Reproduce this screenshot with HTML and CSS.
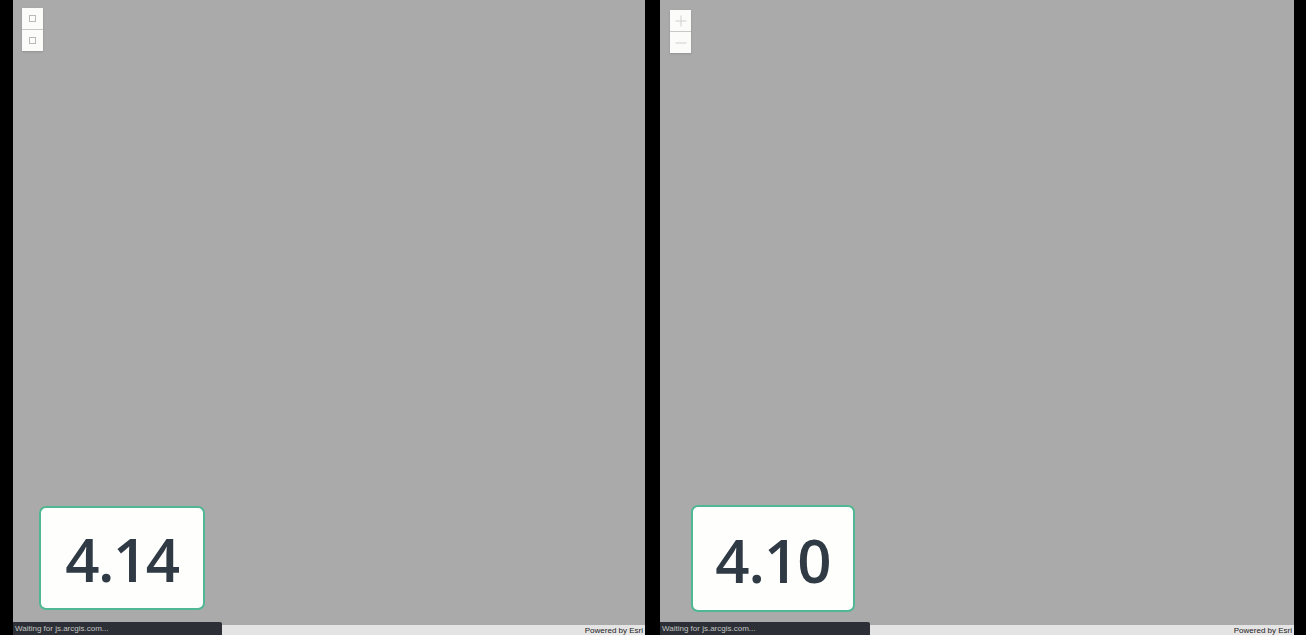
FILE: index.html
```html
<!DOCTYPE html>
<html>
<head>
<meta charset="utf-8">
<link rel="stylesheet" href="styles.css">
</head>
<body>
<div class="screen">
  <div class="panel panel-a">
    <div class="map"></div>
    <div class="attribution">Powered by Esri</div>
    <div class="zoom zoom-a">
      <div class="zbtn"><span class="tofu"></span></div>
      <div class="zbtn"><span class="tofu"></span></div>
    </div>
    <div class="badge badge-a">4.14</div>
    <div class="status">Waiting for js.arcgis.com...</div>
  </div>
  <div class="panel panel-b">
    <div class="map"></div>
    <div class="attribution">Powered by Esri</div>
    <div class="zoom zoom-b">
      <div class="zbtn">
        <svg width="12" height="12" viewBox="0 0 12 12"><path d="M6 0.5V11.5M0.5 6H11.5" stroke="#cfcfcc" stroke-width="1" fill="none"/></svg>
      </div>
      <div class="zbtn">
        <svg width="12" height="12" viewBox="0 0 12 12"><path d="M0.5 6H11.5" stroke="#cfcfcc" stroke-width="1" fill="none"/></svg>
      </div>
    </div>
    <div class="badge badge-b">4.10</div>
    <div class="status">Waiting for js.arcgis.com...</div>
  </div>
</div>
</body>
</html>
```
FILE: styles.css
```css
html, body {
  margin: 0;
  padding: 0;
  background: #000;
  overflow: hidden;
}
.screen {
  display: flex;
  height: 635px;
  padding-left: 13px;
  gap: 15px;
}
.panel {
  position: relative;
  display: flex;
  flex-direction: column;
  height: 636px;
  overflow: hidden;
  font-family: "Liberation Sans", Arial, sans-serif;
}
.panel-a { width: 632px; }
.panel-b { width: 634px; }
.map {
  flex: 1;
  background: #aaaaab;
}
.attribution {
  height: 11px;
  background: #e4e4e4;
  color: #222;
  font-size: 8px;
  line-height: 12px;
  text-align: right;
  padding-right: 2px;
}
.zoom {
  position: absolute;
  width: 21px;
  display: flex;
  flex-direction: column;
  gap: 1px;
  background: #c8c8c6;
  box-shadow: 0 1px 2px rgba(0,0,0,0.15);
}
.zoom-a { left: 9px; top: 8px; }
.zoom-b { left: 10px; top: 10px; }
.zbtn {
  height: 21px;
  background: #fbfbf9;
  display: flex;
  align-items: center;
  justify-content: center;
}
.tofu {
  width: 5px;
  height: 5px;
  border: 1px solid #b9b9b7;
}
.badge {
  position: absolute;
  box-sizing: border-box;
  background: #fefefd;
  border: 2px solid #4fb793;
  border-radius: 7px;
  display: flex;
  align-items: center;
  justify-content: center;
  color: #2f3a44;
  font-family: "Open Sans", "Noto Sans", sans-serif;
  font-size: 60px;
}
.badge-a {
  left: 26px;
  top: 506px;
  width: 166px;
  height: 104px;
  font-weight: 620;
  letter-spacing: -1.5px;
  padding-top: 2px;
}
.badge-b {
  left: 31px;
  top: 505px;
  width: 164px;
  height: 107px;
  font-weight: 560;
  letter-spacing: -1px;
  padding-top: 2px;
}
.status {
  position: absolute;
  left: 0;
  top: 622px;
  width: 209px;
  height: 14px;
  background: #2c3036;
  color: #c4c4c4;
  font-size: 8px;
  line-height: 14px;
  padding-left: 2px;
  box-sizing: border-box;
  border-top-right-radius: 2px;
}
.panel-b .status { width: 210px; }
```
